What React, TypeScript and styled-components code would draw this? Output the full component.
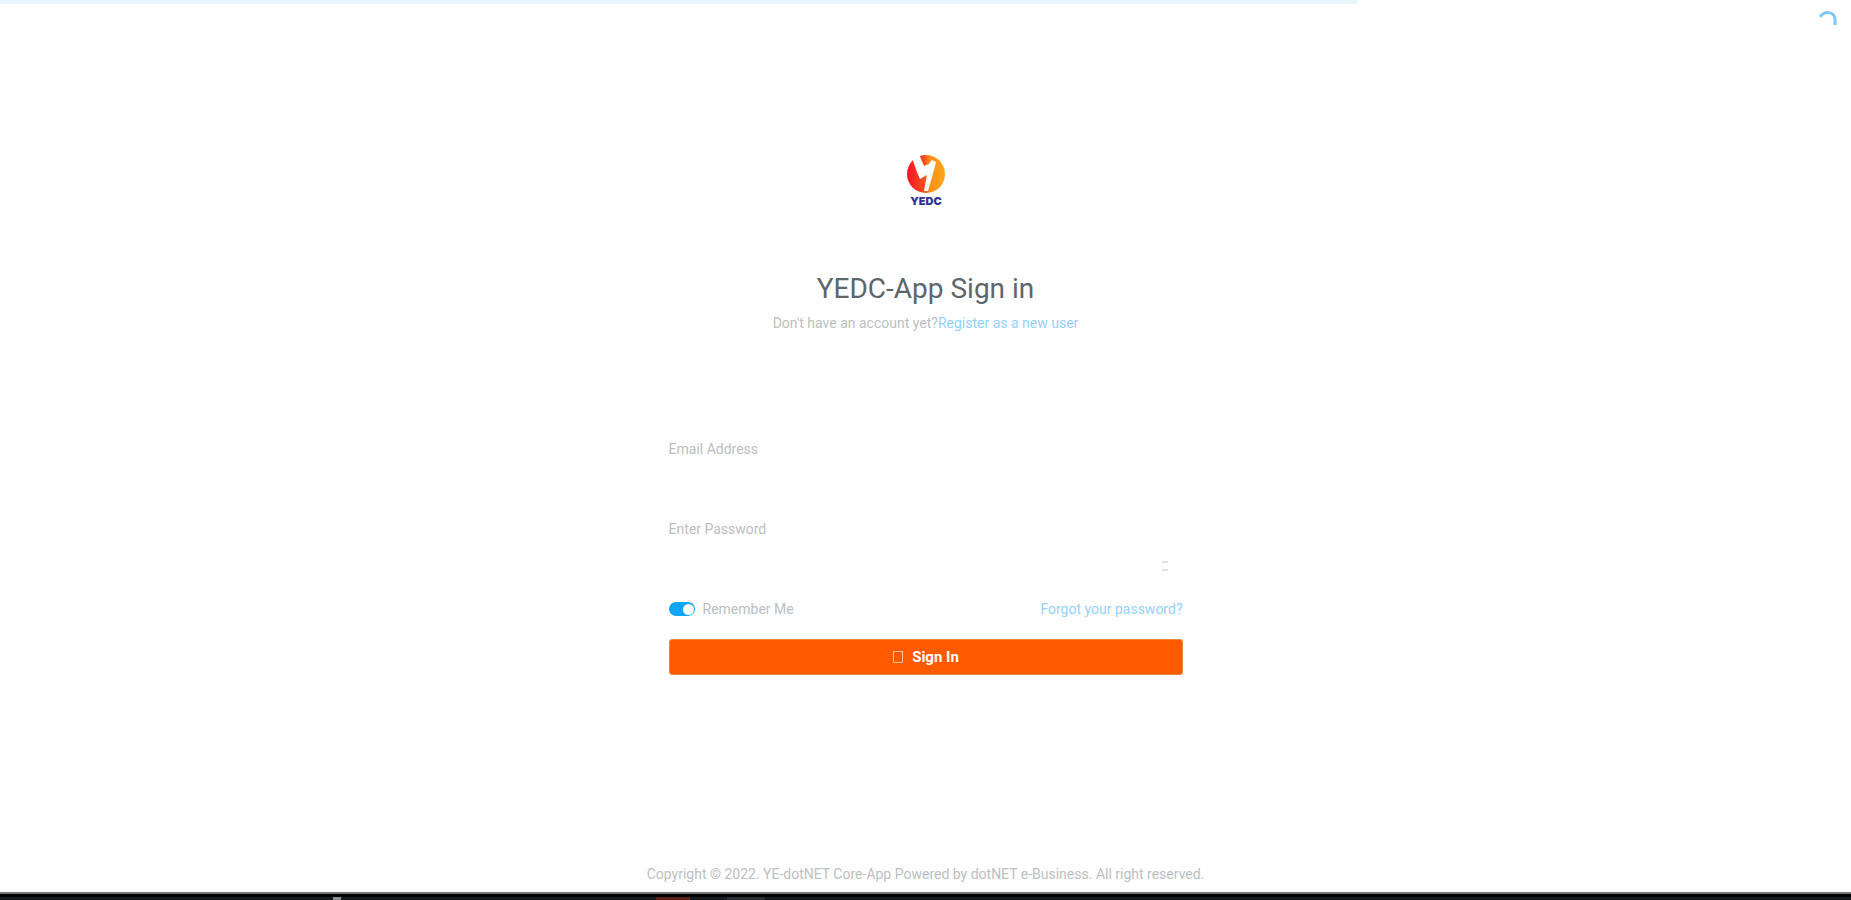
import React from "react";
import styled, { createGlobalStyle } from "styled-components";

const GlobalStyle = createGlobalStyle`
  * { box-sizing: border-box; }
  body {
    margin: 0;
    background: #fefefe;
    color: #bcc0c2;
    font-family: Roboto, "Liberation Sans", sans-serif;
    font-size: 14px;
    line-height: 20px;
  }
`;

const Page = styled.div`
  min-height: 100vh;
  display: flex;
  flex-direction: column;
`;

const TopRow = styled.header`
  display: flex;
  justify-content: space-between;
  height: 32px;
`;

const Progress = styled.div`
  width: 73.3%;
  height: 4px;
  background: #e8f5ff;
`;

const Spinner = styled.svg`
  width: 20px;
  height: 20px;
  margin: 10px 12px 0 0;
`;

const Main = styled.main`
  flex: 1;
  display: flex;
  flex-direction: column;
  align-items: center;
  padding: 121px 16px 0;
`;

const Logo = styled.svg`
  width: 44px;
  height: 54px;
`;

const Title = styled.h1`
  margin: 66px 0 0;
  color: #5d666c;
  font-size: 28px;
  line-height: 32px;
  font-weight: 400;
`;

const Intro = styled.p`
  margin: 8px 0 0;
`;

const Link = styled.a`
  color: #96d1fb;
  text-decoration: none;
`;

const Form = styled.form`
  width: 100%;
  max-width: 514px;
  margin-top: 106px;
`;

const Field = styled.div`
  height: 80px;
`;

const Label = styled.label`
  display: block;
`;

const InputLine = styled.div`
  display: flex;
  align-items: center;
  height: 34px;
  margin-top: 10px;
  padding-right: 14px;
`;

const Input = styled.input`
  flex: 1;
  height: 32px;
  padding: 0 12px;
  border: 0;
  outline: 0;
  background: transparent;
  color: #5d666c;
  font: inherit;
`;

const Reveal = styled.button`
  display: flex;
  padding: 0;
  border: 0;
  background: transparent;
`;

const Options = styled.div`
  display: flex;
  justify-content: space-between;
  align-items: center;
`;

const Remember = styled.label`
  display: flex;
  align-items: center;
  gap: 8px;
`;

const Switch = styled.input`
  appearance: none;
  display: flex;
  align-items: center;
  width: 26px;
  height: 14px;
  margin: 0;
  padding: 1px;
  border-radius: 7px;
  background: #0ea5fa;

  &::after {
    content: "";
    width: 11px;
    height: 11px;
    border-radius: 50%;
    background: #fff;
  }

  &:checked {
    justify-content: flex-end;
  }
`;

const Submit = styled.button`
  display: flex;
  justify-content: center;
  align-items: center;
  gap: 8px;
  width: 100%;
  height: 36px;
  margin-top: 20px;
  border: 1px solid #e58a3c;
  border-radius: 3px;
  background: #ff5a00;
  color: #fff;
  font: 700 15px/20px Roboto, "Liberation Sans", sans-serif;
`;

const Footer = styled.footer`
  padding: 0 16px 8px;
  text-align: center;
`;

const Taskbar = styled.div`
  display: flex;
  align-items: flex-end;
  height: 8px;
  border-top: 2px solid #777;
  background: linear-gradient(#000 0 3px, #141a20 3px);
`;

const TaskMark = styled.span<{ $left: string; $width: number; $color: string }>`
  width: ${(p) => p.$width}px;
  height: 3px;
  margin-left: ${(p) => p.$left};
  background: ${(p) => p.$color};
`;

export default function App() {
  return (
    <>
      <GlobalStyle />
      <Page>
        <TopRow>
          <Progress />
          <Spinner viewBox="0 0 20 20" aria-hidden="true">
            <path d="M1 7 C5 1 14 1 16 8 V15" fill="none" stroke="#7cc8fa" strokeWidth="3" />
          </Spinner>
        </TopRow>
        <Main>
          <Logo viewBox="0 0 44 54" role="img" aria-label="YEDC">
            <defs>
              <linearGradient id="flame" x1="0" x2="1" y1="0" y2="0">
                <stop offset="0" stopColor="#f41428" />
                <stop offset="0.45" stopColor="#fb4c20" />
                <stop offset="0.6" stopColor="#fb9018" />
                <stop offset="1" stopColor="#fda51c" />
              </linearGradient>
            </defs>
            <circle cx="22" cy="21" r="19" fill="url(#flame)" />
            <path
              d="M8 5 L15 1 L17 6 L20 13 L25 11 L28 7 L32 9 L30 17 L24 38 L20 38 L23 22 L16 26 L13 19 Z"
              fill="#fff"
            />
            <text x="22" y="52" textAnchor="middle" fill="#343391" fontFamily="Inter, sans-serif" fontSize="11" fontWeight="900">
              YEDC
            </text>
          </Logo>
          <Title>YEDC-App Sign in</Title>
          <Intro>
            Don't have an account yet?<Link href="#register">Register as a new user</Link>
          </Intro>
          <Form onSubmit={(e) => e.preventDefault()}>
            <Field>
              <Label htmlFor="email">Email Address</Label>
              <InputLine>
                <Input id="email" type="email" />
              </InputLine>
            </Field>
            <Field>
              <Label htmlFor="password">Enter Password</Label>
              <InputLine>
                <Input id="password" type="password" />
                <Reveal type="button" aria-label="Show password">
                  <svg width="8" height="14" viewBox="0 0 8 14" fill="none" stroke="#e2e4e4" strokeWidth="2">
                    <path d="M1 3H7M1 11H7" />
                  </svg>
                </Reveal>
              </InputLine>
            </Field>
            <Options>
              <Remember>
                <Switch type="checkbox" defaultChecked />
                Remember Me
              </Remember>
              <Link href="#forgot">Forgot your password?</Link>
            </Options>
            <Submit type="submit">
              <svg width="12" height="14" viewBox="0 0 12 14" fill="none" stroke="#ffc3a0" strokeWidth="1" aria-hidden="true">
                <rect x="1.5" y="1.5" width="9" height="11" />
              </svg>
              Sign In
            </Submit>
          </Form>
        </Main>
        <Footer>Copyright © 2022. YE-dotNET Core-App Powered by dotNET e-Business. All right reserved.</Footer>
        <Taskbar>
          <TaskMark $left="18%" $width={8} $color="#8b8f92" />
          <TaskMark $left="17%" $width={34} $color="#5a2218" />
          <TaskMark $left="2%" $width={38} $color="#2a3038" />
        </Taskbar>
      </Page>
    </>
  );
}
